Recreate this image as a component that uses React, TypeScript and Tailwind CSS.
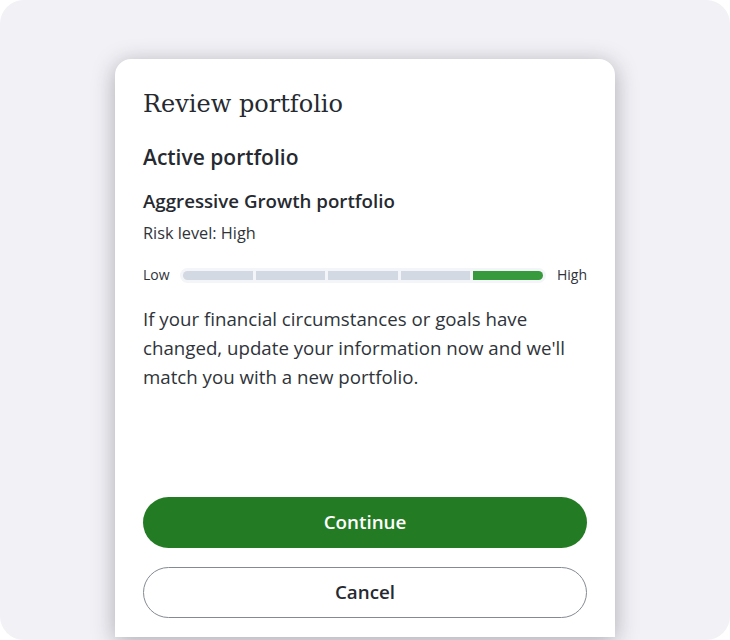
import React from "react";

export default function App() {
  const segs = [0, 1, 2, 3, 4];
  return (
    <div className="w-[730px] h-[640px] bg-white">
      <div className="w-[730px] h-[640px] rounded-[24px] bg-[#f1f1f6] overflow-hidden flex justify-center pt-[59px]">
        <div
          className="w-[500px] h-[578px] bg-white rounded-t-[16px] shadow-[0_4px_22px_rgba(40,40,50,0.35)] flex flex-col px-[28px] pt-[28px] pb-[19px]"
          style={{ fontFamily: '"Open Sans", sans-serif' }}
        >
          <h1
            className="text-[24px] leading-[34px] text-[#262a30]"
            style={{ fontFamily: '"DejaVu Serif", serif', fontWeight: 400 }}
          >
            Review portfolio
          </h1>
          <h2 className="mt-[22px] text-[21px] leading-[28px] font-semibold text-[#262a30]">
            Active portfolio
          </h2>
          <h3 className="mt-[17px] text-[18.7px] leading-[26px] font-semibold text-[#262a30]">
            Aggressive Growth portfolio
          </h3>
          <p className="mt-[8px] text-[16.3px] leading-[22px] text-[#2f343a]">Risk level: High</p>
          <div className="mt-[21px] flex items-center">
            <span className="text-[14px] leading-[20px] text-[#2f343a] w-[37px]">Low</span>
            <div className="flex-1 rounded-full bg-[#f4f5f8] p-[3px] flex gap-[3px]">
              {segs.map((i) => (
                <div
                  key={i}
                  className={
                    "h-[9px] flex-1 " +
                    (i === 4 ? "bg-[#379a3c] rounded-r-full" : "bg-[#d2d9e2]") +
                    (i === 0 ? " rounded-l-full" : "")
                  }
                />
              ))}
            </div>
            <span className="text-[14px] leading-[20px] text-[#2f343a] pl-[11px]">High</span>
          </div>
          <p className="mt-[19px] text-[18.7px] leading-[29px] text-[#2f343a]">
            If your financial circumstances or goals have changed, update your information now and we'll
            match you with a new portfolio.
          </p>
          <div className="mt-auto flex flex-col gap-[19px]">
            <button className="h-[51px] rounded-full bg-[#237c23] text-white text-[18.8px] font-semibold">
              Continue
            </button>
            <button className="h-[51px] rounded-full bg-white border border-[#848a92] text-[#262a30] text-[18.8px] font-semibold">
              Cancel
            </button>
          </div>
        </div>
      </div>
    </div>
  );
}
